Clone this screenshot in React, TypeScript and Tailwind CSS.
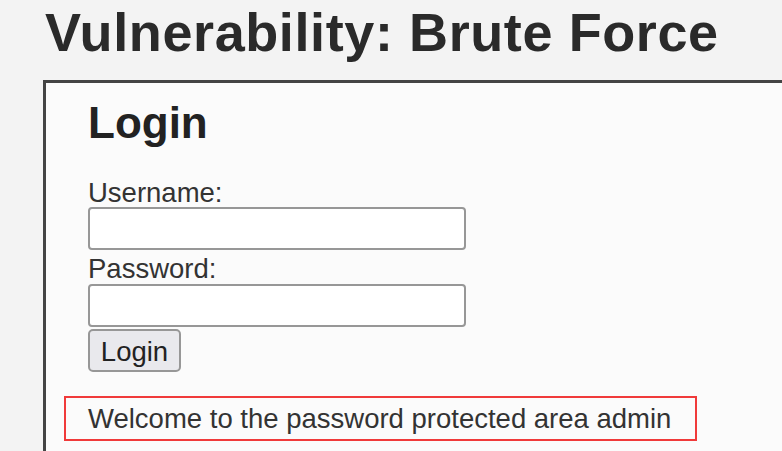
import React from 'react'

const App: React.FC = () => {
    return (
        <div className="w-[782px] h-[451px] overflow-hidden bg-[#f3f3f3] text-[#222]" style={{ fontFamily: '"Liberation Sans", Arial, sans-serif' }}>
            <h1 className="pl-[45px] pt-[3px] h-[80px] text-[54px] leading-[58px] font-bold tracking-[0.6px] text-[#2a2a2a] whitespace-nowrap">
                Vulnerability: Brute Force
            </h1>
            <div className="ml-[43px] w-[800px] h-[400px] border-t-[3px] border-l-[3px] border-[#444] bg-[#fbfbfb] pl-[42px]">
                <h2 className="pt-[14px] text-[44px] leading-[52px] font-bold text-[#222]">Login</h2>
                <form className="mt-[30px] flex flex-col items-start" onSubmit={(e) => e.preventDefault()}>
                    <label className="text-[27.5px] leading-[28px] text-[#333]">Username:</label>
                    <input type="text" className="w-[378px] h-[43px] bg-white border-2 border-[#979797] rounded-[4px]" />
                    <label className="mt-[4px] text-[27.5px] leading-[30px] text-[#333]">Password:</label>
                    <input type="password" className="w-[378px] h-[43px] bg-white border-2 border-[#979797] rounded-[4px]" />
                    <button className="mt-[2px] w-[93px] h-[43px] bg-[#e9e9ed] border-2 border-[#979797] rounded-[5px] text-[27.5px] text-[#222]">Login</button>
                </form>
                <div className="-ml-[24px] mt-[24px] w-[633px] h-[45px] border-[2.5px] border-[#f03a3a] pl-[22px] flex items-center">
                    <p className="text-[27.5px] text-[#333] whitespace-nowrap">Welcome to the password protected area admin</p>
                </div>
            </div>
        </div>
    )
}

export default App
